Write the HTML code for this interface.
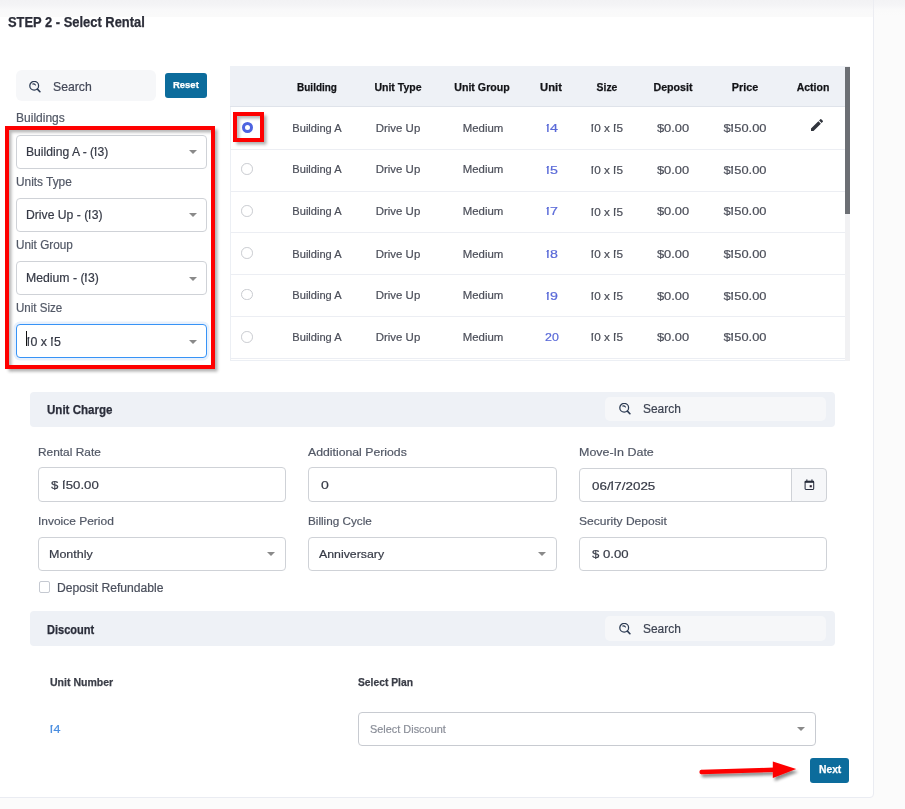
<!DOCTYPE html><html><head><meta charset="utf-8"><style>html,body{margin:0;padding:0;width:905px;height:809px;overflow:hidden;background:#fbfbfb;font-family:"Liberation Sans",sans-serif;}body{position:relative}</style></head><body><div style="position:absolute;left:0;top:0;width:905px;height:17px;background:linear-gradient(#f3f3f5 0px,#f5f5f7 5px,#f8f8f9 8px,#fafafa 10px,#fbfbfb 16px)"></div>
<div style="position:absolute;left:-20px;top:-20px;width:894px;height:818px;box-sizing:border-box;background:#fff;border:1px solid #eaecf2;border-radius:4px;"></div>
<div style="position:absolute;left:0;top:0;width:873px;height:17px;background:linear-gradient(#f2f2f4 0px,#f4f4f6 5px,#f7f7f8 8px,#f9f9fa 10px,#fafafa 16px)"></div>
<div style="position:absolute;left:873px;top:0;width:1px;height:17px;background:#ecedf2"></div>
<div style="position:absolute;left:16px;top:70px;width:140px;height:30.5px;box-sizing:border-box;background:#f6f7f9;border-radius:6px;"></div>
<div style="position:absolute;left:165px;top:73px;width:42px;height:25px;box-sizing:border-box;background:#0c6c9c;border-radius:3px;"></div>
<div style="position:absolute;left:16px;top:134.5px;width:191px;height:34.0px;box-sizing:border-box;border:1px solid #cfd2d7;border-radius:4px;background:#fff;"></div>
<div style="position:absolute;left:188.5px;top:150.0px;width:0;height:0;border-left:4px solid transparent;border-right:4px solid transparent;border-top:4.5px solid #8a8a8a"></div>
<div style="position:absolute;left:16px;top:197.8px;width:191px;height:34.0px;box-sizing:border-box;border:1px solid #cfd2d7;border-radius:4px;background:#fff;"></div>
<div style="position:absolute;left:188.5px;top:213.3px;width:0;height:0;border-left:4px solid transparent;border-right:4px solid transparent;border-top:4.5px solid #8a8a8a"></div>
<div style="position:absolute;left:16px;top:261.1px;width:191px;height:34.0px;box-sizing:border-box;border:1px solid #cfd2d7;border-radius:4px;background:#fff;"></div>
<div style="position:absolute;left:188.5px;top:276.6px;width:0;height:0;border-left:4px solid transparent;border-right:4px solid transparent;border-top:4.5px solid #8a8a8a"></div>
<div style="position:absolute;left:16px;top:324.4px;width:191px;height:34.0px;box-sizing:border-box;border:1.6px solid #3793f6;border-radius:4px;box-shadow:0 0 0 2.5px rgba(80,150,240,.13);background:#fff;"></div>
<div style="position:absolute;left:26px;top:331.4px;width:1px;height:15px;background:#111"></div>
<div style="position:absolute;left:188.5px;top:339.9px;width:0;height:0;border-left:4px solid transparent;border-right:4px solid transparent;border-top:4.5px solid #8a8a8a"></div>
<div style="position:absolute;left:5px;top:126px;width:209.8px;height:242.60000000000002px;box-sizing:border-box;border:4px solid #fe0000;box-shadow:2.5px 2.5px 3px rgba(0,0,0,.32), inset 2.5px 2.5px 3px rgba(0,0,0,.28);"></div>
<div style="position:absolute;left:230px;top:66px;width:620px;height:295px;box-sizing:border-box;border-left:1px solid #eceff4;border-bottom:1px solid #eceff4;"></div>
<div style="position:absolute;left:230px;top:66px;width:615px;height:41px;box-sizing:border-box;background:#eef1f6;border-bottom:1px solid #dfe3ea;"></div>
<div style="position:absolute;left:231px;top:149px;width:614px;height:1px;background:#eceef3"></div>
<div style="position:absolute;left:241.5px;top:121.7px;width:11.4px;height:11.4px;border-radius:50%;box-sizing:border-box;border:3.5px solid #4d63e0;background:#fff"></div>
<div style="position:absolute;left:231px;top:191px;width:614px;height:1px;background:#eceef3"></div>
<div style="position:absolute;left:241.39999999999998px;top:163.39999999999998px;width:11.6px;height:11.6px;border-radius:50%;box-sizing:border-box;border:1px solid #c9cbd0;background:#fff"></div>
<div style="position:absolute;left:231px;top:232px;width:614px;height:1px;background:#eceef3"></div>
<div style="position:absolute;left:241.39999999999998px;top:205.1px;width:11.6px;height:11.6px;border-radius:50%;box-sizing:border-box;border:1px solid #c9cbd0;background:#fff"></div>
<div style="position:absolute;left:231px;top:274px;width:614px;height:1px;background:#eceef3"></div>
<div style="position:absolute;left:241.39999999999998px;top:247.0px;width:11.6px;height:11.6px;border-radius:50%;box-sizing:border-box;border:1px solid #c9cbd0;background:#fff"></div>
<div style="position:absolute;left:231px;top:316px;width:614px;height:1px;background:#eceef3"></div>
<div style="position:absolute;left:241.39999999999998px;top:288.59999999999997px;width:11.6px;height:11.6px;border-radius:50%;box-sizing:border-box;border:1px solid #c9cbd0;background:#fff"></div>
<div style="position:absolute;left:231px;top:358px;width:614px;height:1px;background:#eceef3"></div>
<div style="position:absolute;left:241.39999999999998px;top:331.09999999999997px;width:11.6px;height:11.6px;border-radius:50%;box-sizing:border-box;border:1px solid #c9cbd0;background:#fff"></div>
<svg style="position:absolute;left:809.3px;top:117.3px" width="16" height="16" viewBox="0 0 24 24"><path fill="#30343c" d="M3 17.25V21h3.75L17.81 9.94l-3.75-3.75L3 17.25zM20.71 7.04a1 1 0 0 0 0-1.41l-2.34-2.34a1 1 0 0 0-1.41 0l-1.83 1.83 3.75 3.75 1.83-1.83z"/></svg>
<div style="position:absolute;left:233px;top:112.3px;width:30.5px;height:29.500000000000014px;box-sizing:border-box;border:4px solid #fe0000;box-shadow:2.5px 2.5px 3px rgba(0,0,0,.32), inset 2.5px 2.5px 3px rgba(0,0,0,.28);"></div>
<div style="position:absolute;left:845px;top:66px;width:5px;height:294.5px;box-sizing:border-box;background:#f1f1f3;"></div>
<div style="position:absolute;left:845px;top:66.5px;width:4.5px;height:147.5px;box-sizing:border-box;background:#6c6f74;"></div>
<svg style="position:absolute;left:29px;top:81px" width="12" height="12" viewBox="0 0 12 12"><circle cx="5.2" cy="4.8" r="4.4" fill="none" stroke="#2b3a52" stroke-width="1.25"/><path d="M8.4 8.1 L10.9 10.7" stroke="#2b3a52" stroke-width="1.6" stroke-linecap="round"/><path d="M3.7 3.0 Q5.3 2.6 6.5 4.0" fill="none" stroke="#2b3a52" stroke-width="1.1" stroke-linecap="round"/></svg>
<div style="position:absolute;left:30.2px;top:391.5px;width:804.8px;height:35.5px;box-sizing:border-box;background:#eef1f6;border-radius:4px;"></div>
<div style="position:absolute;left:605px;top:396.7px;width:221px;height:24.80000000000001px;box-sizing:border-box;background:#f6f7f9;border-radius:5px;"></div>
<svg style="position:absolute;left:618.5px;top:403.0px" width="12" height="12" viewBox="0 0 12 12"><circle cx="5.2" cy="4.8" r="4.4" fill="none" stroke="#2b3a52" stroke-width="1.25"/><path d="M8.4 8.1 L10.9 10.7" stroke="#2b3a52" stroke-width="1.6" stroke-linecap="round"/><path d="M3.7 3.0 Q5.3 2.6 6.5 4.0" fill="none" stroke="#2b3a52" stroke-width="1.1" stroke-linecap="round"/></svg>
<div style="position:absolute;left:38.2px;top:467.4px;width:247.60000000000002px;height:34.400000000000034px;box-sizing:border-box;border:1px solid #cfd2d7;border-radius:4px;background:#fff;"></div>
<div style="position:absolute;left:38.2px;top:536.6px;width:247.60000000000002px;height:34.19999999999993px;box-sizing:border-box;border:1px solid #cfd2d7;border-radius:4px;background:#fff;"></div>
<div style="position:absolute;left:308.2px;top:467.4px;width:248.59999999999997px;height:34.400000000000034px;box-sizing:border-box;border:1px solid #cfd2d7;border-radius:4px;background:#fff;"></div>
<div style="position:absolute;left:308.2px;top:536.6px;width:248.59999999999997px;height:34.19999999999993px;box-sizing:border-box;border:1px solid #cfd2d7;border-radius:4px;background:#fff;"></div>
<div style="position:absolute;left:579.2px;top:467.6px;width:212.79999999999995px;height:34.799999999999955px;box-sizing:border-box;border:1px solid #cfd2d7;border-radius:4px 0 0 4px;background:#fff;"></div>
<div style="position:absolute;left:791px;top:467.6px;width:36px;height:34.799999999999955px;box-sizing:border-box;border:1px solid #cfd2d7;border-radius:0 4px 4px 0;background:#f6f7f9;"></div>
<svg style="position:absolute;left:803.5px;top:478.5px" width="11" height="11" viewBox="0 0 11 11"><rect x="1.1" y="2.3" width="8.6" height="8.1" rx="0.8" fill="none" stroke="#2a3040" stroke-width="1.05"/><rect x="0.8" y="1.9" width="9.2" height="1.9" fill="#262c3a"/><rect x="2.3" y="0.4" width="1.1" height="2" fill="#2a3040"/><rect x="7.4" y="0.4" width="1.1" height="2" fill="#2a3040"/><rect x="5.7" y="6.2" width="2.1" height="2.1" fill="#2a2030"/></svg>
<div style="position:absolute;left:579.2px;top:536.6px;width:247.79999999999995px;height:34.19999999999993px;box-sizing:border-box;border:1px solid #cfd2d7;border-radius:4px;background:#fff;"></div>
<div style="position:absolute;left:267px;top:552px;width:0;height:0;border-left:4px solid transparent;border-right:4px solid transparent;border-top:4px solid #8a8a8a"></div>
<div style="position:absolute;left:537.5px;top:552px;width:0;height:0;border-left:4px solid transparent;border-right:4px solid transparent;border-top:4px solid #8a8a8a"></div>
<div style="position:absolute;left:38.6px;top:581.3px;width:11.399999999999999px;height:11.900000000000091px;box-sizing:border-box;border:1px solid #c5c9d1;border-radius:2px;background:#fff;"></div>
<div style="position:absolute;left:30.2px;top:611.2px;width:804.8px;height:35.19999999999993px;box-sizing:border-box;background:#eef1f6;border-radius:4px;"></div>
<div style="position:absolute;left:605px;top:616.4000000000001px;width:221px;height:24.499999999999886px;box-sizing:border-box;background:#f6f7f9;border-radius:5px;"></div>
<svg style="position:absolute;left:618.5px;top:622.7px" width="12" height="12" viewBox="0 0 12 12"><circle cx="5.2" cy="4.8" r="4.4" fill="none" stroke="#2b3a52" stroke-width="1.25"/><path d="M8.4 8.1 L10.9 10.7" stroke="#2b3a52" stroke-width="1.6" stroke-linecap="round"/><path d="M3.7 3.0 Q5.3 2.6 6.5 4.0" fill="none" stroke="#2b3a52" stroke-width="1.1" stroke-linecap="round"/></svg>
<div style="position:absolute;left:358.2px;top:712.3px;width:457.8px;height:34.200000000000045px;box-sizing:border-box;border:1px solid #c8cbd1;border-radius:4px;background:#fff;"></div>
<div style="position:absolute;left:797px;top:727px;width:0;height:0;border-left:4px solid transparent;border-right:4px solid transparent;border-top:4.5px solid #8a8a8a"></div>
<div style="position:absolute;left:810.3px;top:758px;width:39.200000000000045px;height:24.5px;box-sizing:border-box;background:#0c6c9c;border-radius:3px;"></div>
<svg style="position:absolute;left:0;top:0;overflow:visible" width="905" height="809"><defs><filter id="sh" x="-20%" y="-50%" width="140%" height="200%"><feGaussianBlur in="SourceAlpha" stdDeviation="1.4"/><feOffset dx="2" dy="2.8"/><feComponentTransfer><feFuncA type="linear" slope="0.45"/></feComponentTransfer><feMerge><feMergeNode/><feMergeNode in="SourceGraphic"/></feMerge></filter></defs><g filter="url(#sh)"><path d="M701.5 769.8 L774 767.6 L774 772.0 L701.5 774.2 Z" fill="#fe0000"/><circle cx="701.6" cy="772" r="2.2" fill="#fe0000"/><path d="M772.8 761.6 L796.2 769.0 L772.8 778 Z" fill="#fe0000"/></g></svg>
<div style="position:absolute;left:8px;transform-origin:0 0;top:15.15px;font-size:14px;line-height:14px;font-weight:700;color:#2b2d38;transform:scaleX(0.9221);-webkit-text-stroke:0.25px #2b2d38;white-space:nowrap">STEP 2 - Select Rental</div>
<div style="position:absolute;left:53px;transform-origin:0 0;top:80.76px;font-size:12.8px;line-height:12.8px;font-weight:400;color:#424757;transform:scaleX(0.9569);-webkit-text-stroke:0.2px #424757;white-space:nowrap">Search</div>
<div style="position:absolute;left:173.2px;transform-origin:0 0;top:80.10px;font-size:9.8px;line-height:9.8px;font-weight:700;color:#ffffff;transform:scaleX(0.9667);-webkit-text-stroke:0.25px #ffffff;white-space:nowrap">Reset</div>
<div style="position:absolute;left:16px;transform-origin:0 0;top:112.34px;font-size:12px;line-height:12px;font-weight:400;color:#525866;transform:scaleX(1.0020);-webkit-text-stroke:0.2px #525866;white-space:nowrap">Buildings</div>
<div style="position:absolute;left:26.4px;transform-origin:0 0;top:145.87px;font-size:12.2px;line-height:12.2px;font-weight:400;color:#363a46;transform:scaleX(0.9961);-webkit-text-stroke:0.2px #363a46;white-space:nowrap">Building A - (<span style="position:relative;letter-spacing:0.05em;margin-left:0.01em">l<span style="position:absolute;left:-0.02em;top:0.185em;width:0.18em;height:0.08em;background:currentColor;transform:rotate(-38deg);transform-origin:100% 0"></span></span>3)</div>
<div style="position:absolute;left:16px;transform-origin:0 0;top:175.64px;font-size:12px;line-height:12px;font-weight:400;color:#525866;transform:scaleX(0.9879);-webkit-text-stroke:0.2px #525866;white-space:nowrap">Units Type</div>
<div style="position:absolute;left:26.4px;transform-origin:0 0;top:209.17px;font-size:12.2px;line-height:12.2px;font-weight:400;color:#363a46;transform:scaleX(0.9990);-webkit-text-stroke:0.2px #363a46;white-space:nowrap">Drive Up - (<span style="position:relative;letter-spacing:0.05em;margin-left:0.01em">l<span style="position:absolute;left:-0.02em;top:0.185em;width:0.18em;height:0.08em;background:currentColor;transform:rotate(-38deg);transform-origin:100% 0"></span></span>3)</div>
<div style="position:absolute;left:16px;transform-origin:0 0;top:238.94px;font-size:12px;line-height:12px;font-weight:400;color:#525866;transform:scaleX(0.9788);-webkit-text-stroke:0.2px #525866;white-space:nowrap">Unit Group</div>
<div style="position:absolute;left:26.4px;transform-origin:0 0;top:272.47px;font-size:12.2px;line-height:12.2px;font-weight:400;color:#363a46;transform:scaleX(1.0037);-webkit-text-stroke:0.2px #363a46;white-space:nowrap">Medium - (<span style="position:relative;letter-spacing:0.05em;margin-left:0.01em">l<span style="position:absolute;left:-0.02em;top:0.185em;width:0.18em;height:0.08em;background:currentColor;transform:rotate(-38deg);transform-origin:100% 0"></span></span>3)</div>
<div style="position:absolute;left:16px;transform-origin:0 0;top:302.24px;font-size:12px;line-height:12px;font-weight:400;color:#525866;transform:scaleX(0.9640);-webkit-text-stroke:0.2px #525866;white-space:nowrap">Unit Size</div>
<div style="position:absolute;left:26.5px;transform-origin:0 0;top:335.77px;font-size:12.2px;line-height:12.2px;font-weight:400;color:#363a46;transform:scaleX(1.0180);-webkit-text-stroke:0.2px #363a46;white-space:nowrap"><span style="position:relative;letter-spacing:0.05em;margin-left:0.01em">l<span style="position:absolute;left:-0.02em;top:0.185em;width:0.18em;height:0.08em;background:currentColor;transform:rotate(-38deg);transform-origin:100% 0"></span></span>0 x <span style="position:relative;letter-spacing:0.05em;margin-left:0.01em">l<span style="position:absolute;left:-0.02em;top:0.185em;width:0.18em;height:0.08em;background:currentColor;transform:rotate(-38deg);transform-origin:100% 0"></span></span>5</div>
<div style="position:absolute;left:167px;width:300px;text-align:center;transform-origin:150px 0;top:81.57px;font-size:11.5px;line-height:11.5px;font-weight:700;color:#121317;transform:scaleX(0.8652);-webkit-text-stroke:0.25px #121317;white-space:nowrap">Building</div>
<div style="position:absolute;left:248px;width:300px;text-align:center;transform-origin:150px 0;top:81.57px;font-size:11.5px;line-height:11.5px;font-weight:700;color:#121317;transform:scaleX(0.9157);-webkit-text-stroke:0.25px #121317;white-space:nowrap">Unit Type</div>
<div style="position:absolute;left:332px;width:300px;text-align:center;transform-origin:150px 0;top:81.57px;font-size:11.5px;line-height:11.5px;font-weight:700;color:#121317;transform:scaleX(0.9243);-webkit-text-stroke:0.25px #121317;white-space:nowrap">Unit Group</div>
<div style="position:absolute;left:401px;width:300px;text-align:center;transform-origin:150px 0;top:81.57px;font-size:11.5px;line-height:11.5px;font-weight:700;color:#121317;transform:scaleX(0.9750);-webkit-text-stroke:0.25px #121317;white-space:nowrap">Unit</div>
<div style="position:absolute;left:457px;width:300px;text-align:center;transform-origin:150px 0;top:81.57px;font-size:11.5px;line-height:11.5px;font-weight:700;color:#121317;transform:scaleX(0.9037);-webkit-text-stroke:0.25px #121317;white-space:nowrap">Size</div>
<div style="position:absolute;left:523px;width:300px;text-align:center;transform-origin:150px 0;top:81.57px;font-size:11.5px;line-height:11.5px;font-weight:700;color:#121317;transform:scaleX(0.9272);-webkit-text-stroke:0.25px #121317;white-space:nowrap">Deposit</div>
<div style="position:absolute;left:595px;width:300px;text-align:center;transform-origin:150px 0;top:81.57px;font-size:11.5px;line-height:11.5px;font-weight:700;color:#121317;transform:scaleX(0.9381);-webkit-text-stroke:0.25px #121317;white-space:nowrap">Price</div>
<div style="position:absolute;left:663px;width:300px;text-align:center;transform-origin:150px 0;top:81.57px;font-size:11.5px;line-height:11.5px;font-weight:700;color:#121317;transform:scaleX(0.9139);-webkit-text-stroke:0.25px #121317;white-space:nowrap">Action</div>
<div style="position:absolute;left:167px;width:300px;text-align:center;transform-origin:150px 0;top:122.55px;font-size:11.4px;line-height:11.4px;font-weight:400;color:#4b4e59;transform:scaleX(0.9729);-webkit-text-stroke:0.2px #4b4e59;white-space:nowrap">Building A</div>
<div style="position:absolute;left:248px;width:300px;text-align:center;transform-origin:150px 0;top:122.55px;font-size:11.4px;line-height:11.4px;font-weight:400;color:#4b4e59;transform:scaleX(1.0042);-webkit-text-stroke:0.2px #4b4e59;white-space:nowrap">Drive Up</div>
<div style="position:absolute;left:332.5px;width:300px;text-align:center;transform-origin:150px 0;top:122.55px;font-size:11.4px;line-height:11.4px;font-weight:400;color:#4b4e59;transform:scaleX(1.0021);-webkit-text-stroke:0.2px #4b4e59;white-space:nowrap">Medium</div>
<div style="position:absolute;left:401.5px;width:300px;text-align:center;transform-origin:150px 0;top:122.72px;font-size:11.2px;line-height:11.2px;font-weight:400;color:#5a6ad8;transform:scaleX(1.2714);-webkit-text-stroke:0.2px #5a6ad8;white-space:nowrap"><span style="position:relative;letter-spacing:0.05em;margin-left:0.01em">l<span style="position:absolute;left:-0.02em;top:0.185em;width:0.18em;height:0.08em;background:currentColor;transform:rotate(-38deg);transform-origin:100% 0"></span></span>4</div>
<div style="position:absolute;left:457px;width:300px;text-align:center;transform-origin:150px 0;top:122.89px;font-size:11px;line-height:11px;font-weight:400;color:#4b4e59;transform:scaleX(1.0678);-webkit-text-stroke:0.2px #4b4e59;white-space:nowrap"><span style="position:relative;letter-spacing:0.05em;margin-left:0.01em">l<span style="position:absolute;left:-0.02em;top:0.185em;width:0.18em;height:0.08em;background:currentColor;transform:rotate(-38deg);transform-origin:100% 0"></span></span>0 x <span style="position:relative;letter-spacing:0.05em;margin-left:0.01em">l<span style="position:absolute;left:-0.02em;top:0.185em;width:0.18em;height:0.08em;background:currentColor;transform:rotate(-38deg);transform-origin:100% 0"></span></span>5</div>
<div style="position:absolute;left:523.3px;width:300px;text-align:center;transform-origin:150px 0;top:122.72px;font-size:11.2px;line-height:11.2px;font-weight:400;color:#4b4e59;transform:scaleX(1.1500);-webkit-text-stroke:0.2px #4b4e59;white-space:nowrap">$0.00</div>
<div style="position:absolute;left:595px;width:300px;text-align:center;transform-origin:150px 0;top:122.72px;font-size:11.2px;line-height:11.2px;font-weight:400;color:#4b4e59;transform:scaleX(1.1473);-webkit-text-stroke:0.2px #4b4e59;white-space:nowrap">$<span style="position:relative;letter-spacing:0.05em;margin-left:0.01em">l<span style="position:absolute;left:-0.02em;top:0.185em;width:0.18em;height:0.08em;background:currentColor;transform:rotate(-38deg);transform-origin:100% 0"></span></span>50.00</div>
<div style="position:absolute;left:167px;width:300px;text-align:center;transform-origin:150px 0;top:164.45px;font-size:11.4px;line-height:11.4px;font-weight:400;color:#4b4e59;transform:scaleX(0.9729);-webkit-text-stroke:0.2px #4b4e59;white-space:nowrap">Building A</div>
<div style="position:absolute;left:248px;width:300px;text-align:center;transform-origin:150px 0;top:164.45px;font-size:11.4px;line-height:11.4px;font-weight:400;color:#4b4e59;transform:scaleX(1.0042);-webkit-text-stroke:0.2px #4b4e59;white-space:nowrap">Drive Up</div>
<div style="position:absolute;left:332.5px;width:300px;text-align:center;transform-origin:150px 0;top:164.45px;font-size:11.4px;line-height:11.4px;font-weight:400;color:#4b4e59;transform:scaleX(1.0021);-webkit-text-stroke:0.2px #4b4e59;white-space:nowrap">Medium</div>
<div style="position:absolute;left:401.5px;width:300px;text-align:center;transform-origin:150px 0;top:164.62px;font-size:11.2px;line-height:11.2px;font-weight:400;color:#5a6ad8;transform:scaleX(1.2714);-webkit-text-stroke:0.2px #5a6ad8;white-space:nowrap"><span style="position:relative;letter-spacing:0.05em;margin-left:0.01em">l<span style="position:absolute;left:-0.02em;top:0.185em;width:0.18em;height:0.08em;background:currentColor;transform:rotate(-38deg);transform-origin:100% 0"></span></span>5</div>
<div style="position:absolute;left:457px;width:300px;text-align:center;transform-origin:150px 0;top:164.79px;font-size:11px;line-height:11px;font-weight:400;color:#4b4e59;transform:scaleX(1.0678);-webkit-text-stroke:0.2px #4b4e59;white-space:nowrap"><span style="position:relative;letter-spacing:0.05em;margin-left:0.01em">l<span style="position:absolute;left:-0.02em;top:0.185em;width:0.18em;height:0.08em;background:currentColor;transform:rotate(-38deg);transform-origin:100% 0"></span></span>0 x <span style="position:relative;letter-spacing:0.05em;margin-left:0.01em">l<span style="position:absolute;left:-0.02em;top:0.185em;width:0.18em;height:0.08em;background:currentColor;transform:rotate(-38deg);transform-origin:100% 0"></span></span>5</div>
<div style="position:absolute;left:523.3px;width:300px;text-align:center;transform-origin:150px 0;top:164.62px;font-size:11.2px;line-height:11.2px;font-weight:400;color:#4b4e59;transform:scaleX(1.1500);-webkit-text-stroke:0.2px #4b4e59;white-space:nowrap">$0.00</div>
<div style="position:absolute;left:595px;width:300px;text-align:center;transform-origin:150px 0;top:164.62px;font-size:11.2px;line-height:11.2px;font-weight:400;color:#4b4e59;transform:scaleX(1.1473);-webkit-text-stroke:0.2px #4b4e59;white-space:nowrap">$<span style="position:relative;letter-spacing:0.05em;margin-left:0.01em">l<span style="position:absolute;left:-0.02em;top:0.185em;width:0.18em;height:0.08em;background:currentColor;transform:rotate(-38deg);transform-origin:100% 0"></span></span>50.00</div>
<div style="position:absolute;left:167px;width:300px;text-align:center;transform-origin:150px 0;top:206.25px;font-size:11.4px;line-height:11.4px;font-weight:400;color:#4b4e59;transform:scaleX(0.9729);-webkit-text-stroke:0.2px #4b4e59;white-space:nowrap">Building A</div>
<div style="position:absolute;left:248px;width:300px;text-align:center;transform-origin:150px 0;top:206.25px;font-size:11.4px;line-height:11.4px;font-weight:400;color:#4b4e59;transform:scaleX(1.0042);-webkit-text-stroke:0.2px #4b4e59;white-space:nowrap">Drive Up</div>
<div style="position:absolute;left:332.5px;width:300px;text-align:center;transform-origin:150px 0;top:206.25px;font-size:11.4px;line-height:11.4px;font-weight:400;color:#4b4e59;transform:scaleX(1.0021);-webkit-text-stroke:0.2px #4b4e59;white-space:nowrap">Medium</div>
<div style="position:absolute;left:401.5px;width:300px;text-align:center;transform-origin:150px 0;top:206.42px;font-size:11.2px;line-height:11.2px;font-weight:400;color:#5a6ad8;transform:scaleX(1.2714);-webkit-text-stroke:0.2px #5a6ad8;white-space:nowrap"><span style="position:relative;letter-spacing:0.05em;margin-left:0.01em">l<span style="position:absolute;left:-0.02em;top:0.185em;width:0.18em;height:0.08em;background:currentColor;transform:rotate(-38deg);transform-origin:100% 0"></span></span>7</div>
<div style="position:absolute;left:457px;width:300px;text-align:center;transform-origin:150px 0;top:206.59px;font-size:11px;line-height:11px;font-weight:400;color:#4b4e59;transform:scaleX(1.0678);-webkit-text-stroke:0.2px #4b4e59;white-space:nowrap"><span style="position:relative;letter-spacing:0.05em;margin-left:0.01em">l<span style="position:absolute;left:-0.02em;top:0.185em;width:0.18em;height:0.08em;background:currentColor;transform:rotate(-38deg);transform-origin:100% 0"></span></span>0 x <span style="position:relative;letter-spacing:0.05em;margin-left:0.01em">l<span style="position:absolute;left:-0.02em;top:0.185em;width:0.18em;height:0.08em;background:currentColor;transform:rotate(-38deg);transform-origin:100% 0"></span></span>5</div>
<div style="position:absolute;left:523.3px;width:300px;text-align:center;transform-origin:150px 0;top:206.42px;font-size:11.2px;line-height:11.2px;font-weight:400;color:#4b4e59;transform:scaleX(1.1500);-webkit-text-stroke:0.2px #4b4e59;white-space:nowrap">$0.00</div>
<div style="position:absolute;left:595px;width:300px;text-align:center;transform-origin:150px 0;top:206.42px;font-size:11.2px;line-height:11.2px;font-weight:400;color:#4b4e59;transform:scaleX(1.1473);-webkit-text-stroke:0.2px #4b4e59;white-space:nowrap">$<span style="position:relative;letter-spacing:0.05em;margin-left:0.01em">l<span style="position:absolute;left:-0.02em;top:0.185em;width:0.18em;height:0.08em;background:currentColor;transform:rotate(-38deg);transform-origin:100% 0"></span></span>50.00</div>
<div style="position:absolute;left:167px;width:300px;text-align:center;transform-origin:150px 0;top:248.55px;font-size:11.4px;line-height:11.4px;font-weight:400;color:#4b4e59;transform:scaleX(0.9729);-webkit-text-stroke:0.2px #4b4e59;white-space:nowrap">Building A</div>
<div style="position:absolute;left:248px;width:300px;text-align:center;transform-origin:150px 0;top:248.55px;font-size:11.4px;line-height:11.4px;font-weight:400;color:#4b4e59;transform:scaleX(1.0042);-webkit-text-stroke:0.2px #4b4e59;white-space:nowrap">Drive Up</div>
<div style="position:absolute;left:332.5px;width:300px;text-align:center;transform-origin:150px 0;top:248.55px;font-size:11.4px;line-height:11.4px;font-weight:400;color:#4b4e59;transform:scaleX(1.0021);-webkit-text-stroke:0.2px #4b4e59;white-space:nowrap">Medium</div>
<div style="position:absolute;left:401.5px;width:300px;text-align:center;transform-origin:150px 0;top:248.72px;font-size:11.2px;line-height:11.2px;font-weight:400;color:#5a6ad8;transform:scaleX(1.2714);-webkit-text-stroke:0.2px #5a6ad8;white-space:nowrap"><span style="position:relative;letter-spacing:0.05em;margin-left:0.01em">l<span style="position:absolute;left:-0.02em;top:0.185em;width:0.18em;height:0.08em;background:currentColor;transform:rotate(-38deg);transform-origin:100% 0"></span></span>8</div>
<div style="position:absolute;left:457px;width:300px;text-align:center;transform-origin:150px 0;top:248.89px;font-size:11px;line-height:11px;font-weight:400;color:#4b4e59;transform:scaleX(1.0678);-webkit-text-stroke:0.2px #4b4e59;white-space:nowrap"><span style="position:relative;letter-spacing:0.05em;margin-left:0.01em">l<span style="position:absolute;left:-0.02em;top:0.185em;width:0.18em;height:0.08em;background:currentColor;transform:rotate(-38deg);transform-origin:100% 0"></span></span>0 x <span style="position:relative;letter-spacing:0.05em;margin-left:0.01em">l<span style="position:absolute;left:-0.02em;top:0.185em;width:0.18em;height:0.08em;background:currentColor;transform:rotate(-38deg);transform-origin:100% 0"></span></span>5</div>
<div style="position:absolute;left:523.3px;width:300px;text-align:center;transform-origin:150px 0;top:248.72px;font-size:11.2px;line-height:11.2px;font-weight:400;color:#4b4e59;transform:scaleX(1.1500);-webkit-text-stroke:0.2px #4b4e59;white-space:nowrap">$0.00</div>
<div style="position:absolute;left:595px;width:300px;text-align:center;transform-origin:150px 0;top:248.72px;font-size:11.2px;line-height:11.2px;font-weight:400;color:#4b4e59;transform:scaleX(1.1473);-webkit-text-stroke:0.2px #4b4e59;white-space:nowrap">$<span style="position:relative;letter-spacing:0.05em;margin-left:0.01em">l<span style="position:absolute;left:-0.02em;top:0.185em;width:0.18em;height:0.08em;background:currentColor;transform:rotate(-38deg);transform-origin:100% 0"></span></span>50.00</div>
<div style="position:absolute;left:167px;width:300px;text-align:center;transform-origin:150px 0;top:290.35px;font-size:11.4px;line-height:11.4px;font-weight:400;color:#4b4e59;transform:scaleX(0.9729);-webkit-text-stroke:0.2px #4b4e59;white-space:nowrap">Building A</div>
<div style="position:absolute;left:248px;width:300px;text-align:center;transform-origin:150px 0;top:290.35px;font-size:11.4px;line-height:11.4px;font-weight:400;color:#4b4e59;transform:scaleX(1.0042);-webkit-text-stroke:0.2px #4b4e59;white-space:nowrap">Drive Up</div>
<div style="position:absolute;left:332.5px;width:300px;text-align:center;transform-origin:150px 0;top:290.35px;font-size:11.4px;line-height:11.4px;font-weight:400;color:#4b4e59;transform:scaleX(1.0021);-webkit-text-stroke:0.2px #4b4e59;white-space:nowrap">Medium</div>
<div style="position:absolute;left:401.5px;width:300px;text-align:center;transform-origin:150px 0;top:290.52px;font-size:11.2px;line-height:11.2px;font-weight:400;color:#5a6ad8;transform:scaleX(1.2714);-webkit-text-stroke:0.2px #5a6ad8;white-space:nowrap"><span style="position:relative;letter-spacing:0.05em;margin-left:0.01em">l<span style="position:absolute;left:-0.02em;top:0.185em;width:0.18em;height:0.08em;background:currentColor;transform:rotate(-38deg);transform-origin:100% 0"></span></span>9</div>
<div style="position:absolute;left:457px;width:300px;text-align:center;transform-origin:150px 0;top:290.69px;font-size:11px;line-height:11px;font-weight:400;color:#4b4e59;transform:scaleX(1.0678);-webkit-text-stroke:0.2px #4b4e59;white-space:nowrap"><span style="position:relative;letter-spacing:0.05em;margin-left:0.01em">l<span style="position:absolute;left:-0.02em;top:0.185em;width:0.18em;height:0.08em;background:currentColor;transform:rotate(-38deg);transform-origin:100% 0"></span></span>0 x <span style="position:relative;letter-spacing:0.05em;margin-left:0.01em">l<span style="position:absolute;left:-0.02em;top:0.185em;width:0.18em;height:0.08em;background:currentColor;transform:rotate(-38deg);transform-origin:100% 0"></span></span>5</div>
<div style="position:absolute;left:523.3px;width:300px;text-align:center;transform-origin:150px 0;top:290.52px;font-size:11.2px;line-height:11.2px;font-weight:400;color:#4b4e59;transform:scaleX(1.1500);-webkit-text-stroke:0.2px #4b4e59;white-space:nowrap">$0.00</div>
<div style="position:absolute;left:595px;width:300px;text-align:center;transform-origin:150px 0;top:290.52px;font-size:11.2px;line-height:11.2px;font-weight:400;color:#4b4e59;transform:scaleX(1.1473);-webkit-text-stroke:0.2px #4b4e59;white-space:nowrap">$<span style="position:relative;letter-spacing:0.05em;margin-left:0.01em">l<span style="position:absolute;left:-0.02em;top:0.185em;width:0.18em;height:0.08em;background:currentColor;transform:rotate(-38deg);transform-origin:100% 0"></span></span>50.00</div>
<div style="position:absolute;left:167px;width:300px;text-align:center;transform-origin:150px 0;top:332.05px;font-size:11.4px;line-height:11.4px;font-weight:400;color:#4b4e59;transform:scaleX(0.9729);-webkit-text-stroke:0.2px #4b4e59;white-space:nowrap">Building A</div>
<div style="position:absolute;left:248px;width:300px;text-align:center;transform-origin:150px 0;top:332.05px;font-size:11.4px;line-height:11.4px;font-weight:400;color:#4b4e59;transform:scaleX(1.0042);-webkit-text-stroke:0.2px #4b4e59;white-space:nowrap">Drive Up</div>
<div style="position:absolute;left:332.5px;width:300px;text-align:center;transform-origin:150px 0;top:332.05px;font-size:11.4px;line-height:11.4px;font-weight:400;color:#4b4e59;transform:scaleX(1.0021);-webkit-text-stroke:0.2px #4b4e59;white-space:nowrap">Medium</div>
<div style="position:absolute;left:401.5px;width:300px;text-align:center;transform-origin:150px 0;top:332.22px;font-size:11.2px;line-height:11.2px;font-weight:400;color:#5a6ad8;transform:scaleX(1.1082);-webkit-text-stroke:0.2px #5a6ad8;white-space:nowrap">20</div>
<div style="position:absolute;left:457px;width:300px;text-align:center;transform-origin:150px 0;top:332.39px;font-size:11px;line-height:11px;font-weight:400;color:#4b4e59;transform:scaleX(1.0678);-webkit-text-stroke:0.2px #4b4e59;white-space:nowrap"><span style="position:relative;letter-spacing:0.05em;margin-left:0.01em">l<span style="position:absolute;left:-0.02em;top:0.185em;width:0.18em;height:0.08em;background:currentColor;transform:rotate(-38deg);transform-origin:100% 0"></span></span>0 x <span style="position:relative;letter-spacing:0.05em;margin-left:0.01em">l<span style="position:absolute;left:-0.02em;top:0.185em;width:0.18em;height:0.08em;background:currentColor;transform:rotate(-38deg);transform-origin:100% 0"></span></span>5</div>
<div style="position:absolute;left:523.3px;width:300px;text-align:center;transform-origin:150px 0;top:332.22px;font-size:11.2px;line-height:11.2px;font-weight:400;color:#4b4e59;transform:scaleX(1.1500);-webkit-text-stroke:0.2px #4b4e59;white-space:nowrap">$0.00</div>
<div style="position:absolute;left:595px;width:300px;text-align:center;transform-origin:150px 0;top:332.22px;font-size:11.2px;line-height:11.2px;font-weight:400;color:#4b4e59;transform:scaleX(1.1473);-webkit-text-stroke:0.2px #4b4e59;white-space:nowrap">$<span style="position:relative;letter-spacing:0.05em;margin-left:0.01em">l<span style="position:absolute;left:-0.02em;top:0.185em;width:0.18em;height:0.08em;background:currentColor;transform:rotate(-38deg);transform-origin:100% 0"></span></span>50.00</div>
<div style="position:absolute;left:46.8px;transform-origin:0 0;top:403.84px;font-size:12px;line-height:12px;font-weight:700;color:#2a2d3a;transform:scaleX(0.9630);-webkit-text-stroke:0.25px #2a2d3a;white-space:nowrap">Unit Charge</div>
<div style="position:absolute;left:643.3px;transform-origin:0 0;top:403.34px;font-size:12px;line-height:12px;font-weight:400;color:#3d4352;transform:scaleX(0.9939);-webkit-text-stroke:0.2px #3d4352;white-space:nowrap">Search</div>
<div style="position:absolute;left:38.2px;transform-origin:0 0;top:446.87px;font-size:11.5px;line-height:11.5px;font-weight:400;color:#525866;transform:scaleX(1.0340);-webkit-text-stroke:0.2px #525866;white-space:nowrap">Rental Rate</div>
<div style="position:absolute;left:38.2px;transform-origin:0 0;top:515.57px;font-size:11.5px;line-height:11.5px;font-weight:400;color:#525866;transform:scaleX(1.0401);-webkit-text-stroke:0.2px #525866;white-space:nowrap">Invoice Period</div>
<div style="position:absolute;left:50.7px;transform-origin:0 0;top:479.81px;font-size:11.8px;line-height:11.8px;font-weight:400;color:#363a46;transform:scaleX(1.1194);-webkit-text-stroke:0.2px #363a46;white-space:nowrap">$ <span style="position:relative;letter-spacing:0.05em;margin-left:0.01em">l<span style="position:absolute;left:-0.02em;top:0.185em;width:0.18em;height:0.08em;background:currentColor;transform:rotate(-38deg);transform-origin:100% 0"></span></span>50.00</div>
<div style="position:absolute;left:49.2px;transform-origin:0 0;top:548.91px;font-size:11.8px;line-height:11.8px;font-weight:400;color:#363a46;transform:scaleX(1.0602);-webkit-text-stroke:0.2px #363a46;white-space:nowrap">Monthly</div>
<div style="position:absolute;left:308.2px;transform-origin:0 0;top:446.87px;font-size:11.5px;line-height:11.5px;font-weight:400;color:#525866;transform:scaleX(1.0658);-webkit-text-stroke:0.2px #525866;white-space:nowrap">Additional Periods</div>
<div style="position:absolute;left:308.2px;transform-origin:0 0;top:515.57px;font-size:11.5px;line-height:11.5px;font-weight:400;color:#525866;transform:scaleX(1.0185);-webkit-text-stroke:0.2px #525866;white-space:nowrap">Billing Cycle</div>
<div style="position:absolute;left:321.3px;transform-origin:0 0;top:479.81px;font-size:11.8px;line-height:11.8px;font-weight:400;color:#363a46;transform:scaleX(1.1886);-webkit-text-stroke:0.2px #363a46;white-space:nowrap">0</div>
<div style="position:absolute;left:319.3px;transform-origin:0 0;top:548.91px;font-size:11.8px;line-height:11.8px;font-weight:400;color:#363a46;transform:scaleX(1.0450);-webkit-text-stroke:0.2px #363a46;white-space:nowrap">Anniversary</div>
<div style="position:absolute;left:579.2px;transform-origin:0 0;top:446.87px;font-size:11.5px;line-height:11.5px;font-weight:400;color:#525866;transform:scaleX(1.0836);-webkit-text-stroke:0.2px #525866;white-space:nowrap">Move-In Date</div>
<div style="position:absolute;left:579.2px;transform-origin:0 0;top:515.57px;font-size:11.5px;line-height:11.5px;font-weight:400;color:#525866;transform:scaleX(1.0486);-webkit-text-stroke:0.2px #525866;white-space:nowrap">Security Deposit</div>
<div style="position:absolute;left:591.6px;transform-origin:0 0;top:480.91px;font-size:11.8px;line-height:11.8px;font-weight:400;color:#363a46;transform:scaleX(1.1338);-webkit-text-stroke:0.2px #363a46;white-space:nowrap">06/<span style="position:relative;letter-spacing:0.05em;margin-left:0.01em">l<span style="position:absolute;left:-0.02em;top:0.185em;width:0.18em;height:0.08em;background:currentColor;transform:rotate(-38deg);transform-origin:100% 0"></span></span>7/2025</div>
<div style="position:absolute;left:591.6px;transform-origin:0 0;top:548.91px;font-size:11.8px;line-height:11.8px;font-weight:400;color:#363a46;transform:scaleX(1.1154);-webkit-text-stroke:0.2px #363a46;white-space:nowrap">$ 0.00</div>
<div style="position:absolute;left:56.9px;transform-origin:0 0;top:582.19px;font-size:12.3px;line-height:12.3px;font-weight:400;color:#4a4f5c;transform:scaleX(0.9860);-webkit-text-stroke:0.2px #4a4f5c;white-space:nowrap">Deposit Refundable</div>
<div style="position:absolute;left:46.8px;transform-origin:0 0;top:624.34px;font-size:12px;line-height:12px;font-weight:700;color:#2a2d3a;transform:scaleX(0.9193);-webkit-text-stroke:0.25px #2a2d3a;white-space:nowrap">Discount</div>
<div style="position:absolute;left:643.3px;transform-origin:0 0;top:623.04px;font-size:12px;line-height:12px;font-weight:400;color:#3d4352;transform:scaleX(0.9939);-webkit-text-stroke:0.2px #3d4352;white-space:nowrap">Search</div>
<div style="position:absolute;left:49.6px;transform-origin:0 0;top:676.40px;font-size:11.7px;line-height:11.7px;font-weight:700;color:#3a3d47;transform:scaleX(0.9012);-webkit-text-stroke:0.25px #3a3d47;white-space:nowrap">Unit Number</div>
<div style="position:absolute;left:358.4px;transform-origin:0 0;top:676.77px;font-size:11.5px;line-height:11.5px;font-weight:700;color:#3a3d47;transform:scaleX(0.8961);-webkit-text-stroke:0.25px #3a3d47;white-space:nowrap">Select Plan</div>
<div style="position:absolute;left:49.9px;transform-origin:0 0;top:723.59px;font-size:11px;line-height:11px;font-weight:400;color:#4a8ee0;transform:scaleX(1.1397);-webkit-text-stroke:0.2px #4a8ee0;white-space:nowrap"><span style="position:relative;letter-spacing:0.05em;margin-left:0.01em">l<span style="position:absolute;left:-0.02em;top:0.185em;width:0.18em;height:0.08em;background:currentColor;transform:rotate(-38deg);transform-origin:100% 0"></span></span>4</div>
<div style="position:absolute;left:369.7px;transform-origin:0 0;top:723.67px;font-size:11.5px;line-height:11.5px;font-weight:400;color:#8a8e98;transform:scaleX(0.9486);-webkit-text-stroke:0.2px #8a8e98;white-space:nowrap">Select Discount</div>
<div style="position:absolute;left:819.3px;transform-origin:0 0;top:764.83px;font-size:10px;line-height:10px;font-weight:700;color:#ffffff;transform:scaleX(1.0282);-webkit-text-stroke:0.25px #ffffff;white-space:nowrap">Next</div></body></html>
